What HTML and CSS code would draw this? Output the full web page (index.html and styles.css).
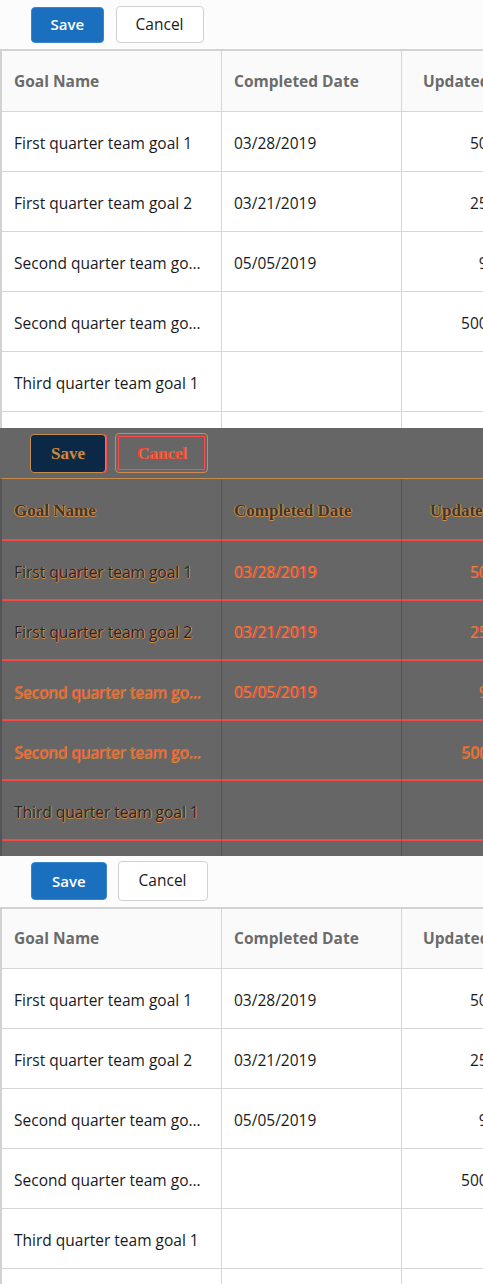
FILE: index.html
```html
<!DOCTYPE html>
<html lang="en">
<head>
<meta charset="utf-8">
<title>Goals – inline edit</title>
<link rel="stylesheet" href="styles.css">
</head>
<body>
<section class="panel">
  <div class="toolbar">
    <button class="btn btn-brand">Save</button>
    <button class="btn btn-neutral">Cancel</button>
  </div>
  <div class="grid">
    <div class="cell head">Goal Name</div>
    <div class="cell head">Completed Date</div>
    <div class="cell head num">Updated Value</div>

    <div class="cell">First quarter team goal 1</div>
    <div class="cell">03/28/2019</div>
    <div class="cell num">50,000.00</div>

    <div class="cell">First quarter team goal 2</div>
    <div class="cell">03/21/2019</div>
    <div class="cell num">25,000.00</div>

    <div class="cell">Second quarter team goal 1</div>
    <div class="cell">05/05/2019</div>
    <div class="cell num">9,000.00</div>

    <div class="cell">Second quarter team goal 2</div>
    <div class="cell"></div>
    <div class="cell num">500,000.00</div>

    <div class="cell">Third quarter team goal 1</div>
    <div class="cell"></div>
    <div class="cell num"></div>

    <div class="cell">Third quarter team goal 2</div>
    <div class="cell"></div>
    <div class="cell num"></div>
  </div>
</section>

<section class="panel panel-diff">
  <div class="toolbar">
    <button class="btn btn-brand">Save</button>
    <button class="btn btn-neutral">Cancel</button>
  </div>
  <div class="grid">
    <div class="cell head">Goal Name</div>
    <div class="cell head">Completed Date</div>
    <div class="cell head num">Updated Value</div>

    <div class="cell ink-dark">First quarter team goal 1</div>
    <div class="cell ink-warm">03/28/2019</div>
    <div class="cell num ink-warm">50,000.00</div>

    <div class="cell ink-dark">First quarter team goal 2</div>
    <div class="cell ink-warm">03/21/2019</div>
    <div class="cell num ink-warm">25,000.00</div>

    <div class="cell ink-red">Second quarter team goal 1</div>
    <div class="cell ink-warm">05/05/2019</div>
    <div class="cell num ink-warm">9,000.00</div>

    <div class="cell ink-red">Second quarter team goal 2</div>
    <div class="cell"></div>
    <div class="cell num ink-red">500,000.00</div>

    <div class="cell ink-dark">Third quarter team goal 1</div>
    <div class="cell"></div>
    <div class="cell num"></div>

    <div class="cell ink-dark">Third quarter team goal 2</div>
    <div class="cell"></div>
    <div class="cell num"></div>
  </div>
</section>

<section class="panel panel-alt">
  <div class="toolbar">
    <button class="btn btn-brand">Save</button>
    <button class="btn btn-neutral">Cancel</button>
  </div>
  <div class="grid">
    <div class="cell head">Goal Name</div>
    <div class="cell head">Completed Date</div>
    <div class="cell head num">Updated Value</div>

    <div class="cell">First quarter team goal 1</div>
    <div class="cell">03/28/2019</div>
    <div class="cell num">50,000.00</div>

    <div class="cell">First quarter team goal 2</div>
    <div class="cell">03/21/2019</div>
    <div class="cell num">25,000.00</div>

    <div class="cell">Second quarter team goal 1</div>
    <div class="cell">05/05/2019</div>
    <div class="cell num">9,000.00</div>

    <div class="cell">Second quarter team goal 2</div>
    <div class="cell"></div>
    <div class="cell num">500,000.00</div>

    <div class="cell">Third quarter team goal 1</div>
    <div class="cell"></div>
    <div class="cell num"></div>

    <div class="cell">Third quarter team goal 2</div>
    <div class="cell"></div>
    <div class="cell num"></div>
  </div>
</section>
</body>
</html>
```

FILE: styles.css
```css
* { box-sizing: border-box; }

body {
  margin: 0;
  font-family: "Open Sans", "Noto Sans", sans-serif;
  background: #fcfcfc;
}

.panel {
  height: 428px;
  overflow: hidden;
  background: #fcfcfc;
}

/* ---------- toolbar ---------- */
.toolbar {
  height: 49px;
  display: flex;
  align-items: center;
  gap: 12px;
  padding-left: 31px;
}

.btn {
  margin: 0;
  font-family: inherit;
  font-size: 15px;
  line-height: 1;
  border-radius: 4px;
  padding: 0 18.5px;
  cursor: pointer;
}

.btn-brand {
  height: 36px;
  background: #1a6fbf;
  border: 1px solid #3a86cb;
  color: #ffffff;
  font-weight: 600;
}

.btn-neutral {
  height: 37px;
  background: #ffffff;
  border: 1px solid #d0d0d0;
  color: #1a1a1a;
  font-size: 15.5px;
  padding: 0 19px;
}

/* ---------- grid ---------- */
.grid {
  display: grid;
  grid-template-columns: 220px 180px 148px;
  width: max-content;
  border-top: 2px solid #d2d2d2;
  border-left: 2px solid #d2d2d2;
}

.cell {
  height: 60px;
  padding: 4px 12px 0;
  line-height: 55px;
  border-right: 1px solid #d6d6d6;
  border-bottom: 1px solid #d6d6d6;
  background: #ffffff;
  color: #181a22;
  font-size: 15.5px;
  white-space: nowrap;
  overflow: hidden;
  text-overflow: ellipsis;
}

.cell.head {
  height: 61px;
  padding-top: 0;
  line-height: 60px;
  background: #fafafa;
  color: #6b6b6b;
  font-size: 15.5px;
  font-weight: 700;
}

.num { text-align: right; }
.cell.num { padding-right: 9px; }
.cell.head.num { padding-right: 12px; }

/* ---------- alternate (actual) panel ---------- */
.panel-alt .toolbar {
  height: 51px;
  padding-bottom: 1px;
  gap: 11px;
}

.panel-alt .btn { padding: 0 20px; }
.panel-alt .btn-brand { height: 38px; }
.panel-alt .btn-neutral { height: 40px; }
.panel-alt .cell.head { height: 60px; line-height: 59px; }

/* ---------- diff panel ---------- */
.panel-diff { background: #666666; }

.panel-diff .toolbar {
  height: 50px;
  gap: 9px;
  padding-left: 30px;
}

.panel-diff .btn {
  font-family: "Liberation Serif", "DejaVu Serif", serif;
  font-weight: 700;
  font-size: 17px;
  padding: 0;
}

.panel-diff .btn-brand {
  width: 76px;
  height: 39px;
  background: #0b2947;
  border: 1px solid #c68c4c;
  box-shadow: 1px 0 0 #ff4a4a;
  color: #c88a48;
  text-shadow: 1px 1px 0 #3a2c20;
}

.panel-diff .btn-neutral {
  width: 93px;
  height: 40px;
  background: transparent;
  border: 1px solid #d08a50;
  box-shadow: inset 0 0 0 2px #666666, inset 0 0 0 3px #ff4a4a;
  color: #f0463a;
  text-shadow: 1px 0 0 #c88a48;
}

.panel-diff .grid {
  border-top: 1px solid #c98b4b;
  border-left: 2px solid #555555;
}

.panel-diff .cell {
  padding-top: 4px;
  line-height: 54px;
  background: transparent;
  border-right: 1px solid #555555;
  border-bottom: 2px solid #f24a4a;
  color: #c98a48;
}

.panel-diff .cell.head {
  height: 62px;
  padding-top: 4px;
  line-height: 56px;
  background: transparent;
  font-family: "Liberation Serif", "DejaVu Serif", serif;
  font-size: 17px;
  color: #3d3731;
  text-shadow: 1px 0 0 #cf8d47, -1px 0 0 #cf8d47, 0 1px 0 #cf8d47;
}

.panel-diff .ink-dark {
  color: #1f2436;
  text-shadow: 1px 0 0 #cf8a40, 0 1px 0 #cf8a40;
}

.panel-diff .ink-warm {
  color: #e8843a;
  text-shadow: 1px 0 0 #ff3b3b;
}

.panel-diff .ink-red {
  color: #e85a3a;
  text-shadow: 1px 0 0 #cf8a40, 0 1px 0 #cf8a40;
}
```
